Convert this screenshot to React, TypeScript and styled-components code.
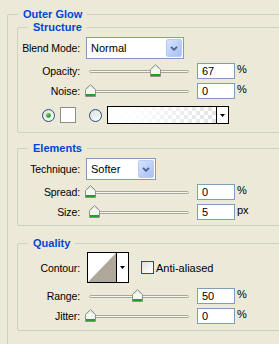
import React from "react";
import styled, { createGlobalStyle } from "styled-components";

const Global = createGlobalStyle`
  html, body { margin: 0; padding: 0; background: #ECE9D8; overflow: hidden; }
  body {
    font-family: "Liberation Sans", Arial, sans-serif;
    font-size: 10.5px;
    color: #000;
  }
`;

const Frame = styled.div`
  width: 100vw;
  height: 100vh;
  overflow: hidden;
`;

const Page = styled.div`
  padding: 8px 0 0 7px;
  width: 340px;
`;

const Group = styled.fieldset<{ $mt?: number }>`
  margin: ${(p) => p.$mt ?? 0}px 0 0 0;
  padding: 0;
  border: 1px solid #D0D0BF;
  border-radius: 2px;
  min-width: 0;
`;

const Outer = styled(Group)`
  height: 400px;
`;

const Title = styled.legend`
  margin-left: 10px;
  padding: 0 5px;
  font-weight: bold;
  font-size: 11px;
  line-height: 13px;
  color: #0046D5;
`;

const OuterBody = styled.div`
  padding: 0 0 0 9px;
`;

const Body = styled.div<{ $pt: number; $pb: number }>`
  display: flex;
  flex-direction: column;
  padding: ${(p) => p.$pt}px 0 ${(p) => p.$pb}px 0;
`;

const Row = styled.div<{ $mt?: number; $h: number; $pl?: number }>`
  display: flex;
  align-items: center;
  height: ${(p) => p.$h}px;
  margin-top: ${(p) => p.$mt ?? 0}px;
  padding-left: ${(p) => p.$pl ?? 0}px;
`;

const Label = styled.span`
  flex: none;
  width: 62px;
  margin-right: 6px;
  text-align: right;
  white-space: nowrap;
  letter-spacing: -0.1px;
`;

const Select = styled.div<{ $w: number }>`
  box-sizing: border-box;
  width: ${(p) => p.$w}px;
  height: 22px;
  border: 1px solid #7F9DB9;
  background: #fff;
  display: flex;
  align-items: center;
  padding: 1px;
`;

const SelectText = styled.span`
  flex: 1;
  padding-left: 3px;
  font-size: 11px;
`;

const ComboButton = styled.div`
  box-sizing: border-box;
  width: 16px;
  height: 100%;
  border: 1px solid #B9CBF3;
  border-radius: 2px;
  background: linear-gradient(135deg, #D8E4FD 0%, #B9CDF9 60%, #A9C0F5 100%);
  display: flex;
  align-items: center;
  justify-content: center;
`;

const SliderBox = styled.div`
  position: relative;
  flex: none;
  width: 111px;
  height: 16px;
  display: flex;
  align-items: center;
`;

const Track = styled.div`
  box-sizing: border-box;
  margin-left: 3px;
  width: 100px;
  height: 3px;
  border: 1px solid #A8A696;
  border-radius: 2px;
  background: #F7F6F1;
`;

const Thumb = styled.svg`
  position: absolute;
  top: 1px;
`;

const NumBox = styled.div`
  box-sizing: border-box;
  flex: none;
  width: 38px;
  height: 16px;
  border: 1px solid #7F9DB9;
  background: #fff;
  padding-left: 4px;
  line-height: 14px;
  font-size: 11px;
`;

const Unit = styled.span`
  align-self: flex-start;
  margin-left: 2px;
  line-height: 13px;
  font-size: 11px;
`;

const Swatch = styled.div`
  box-sizing: border-box;
  width: 16px;
  height: 16px;
  margin-left: 5px;
  border: 1px solid #8E8E86;
  background: #fff;
`;

const GradientBox = styled.div`
  box-sizing: border-box;
  margin-left: 5px;
  width: 122px;
  height: 18px;
  border: 1px solid #000;
  display: flex;
`;

const GradientFill = styled.div`
  flex: 1;
  background:
    linear-gradient(to right, #fff 0%, rgba(255, 255, 255, 0.9) 25%, rgba(255, 255, 255, 0) 100%),
    repeating-conic-gradient(#E2E2E2 0% 25%, #fff 0% 50%) 0 0 / 8px 8px;
`;

const DropPart = styled.div`
  width: 11px;
  border-left: 1px solid #000;
  background: #fff;
  display: flex;
  align-items: center;
  justify-content: center;
`;

const ContourBox = styled.div`
  box-sizing: border-box;
  margin-left: 1px;
  width: 42px;
  height: 31px;
  border: 1px solid #000;
  display: flex;
`;

const ContourPreview = styled.svg`
  display: block;
`;

const CheckLabel = styled.label`
  display: flex;
  align-items: center;
  margin-left: 12px;
  font-size: 11px;
`;

const CheckBox = styled.span`
  box-sizing: border-box;
  width: 13px;
  height: 13px;
  margin-right: 2px;
  border: 1px solid #1C5180;
  background: linear-gradient(135deg, #DCDCD7 0%, #F5F5F2 60%, #fff 100%);
`;

const Chevron = () => (
  <svg width="8" height="5" viewBox="0 0 8 5">
    <path d="M1 0.8 L4 3.8 L7 0.8" fill="none" stroke="#4D6185" strokeWidth="1.8" />
  </svg>
);

const DownTri = () => (
  <svg width="5" height="3" viewBox="0 0 5 3">
    <path d="M0 0 H5 L2.5 3 Z" fill="#000" />
  </svg>
);

const Radio = ({ checked, ml = 0 }: { checked?: boolean; ml?: number }) => (
  <svg width="13" height="13" viewBox="0 0 13 13" style={{ marginLeft: ml }}>
    <defs>
      <linearGradient id="rg" x1="0" y1="0" x2="1" y2="1">
        <stop offset="0" stopColor="#DCDCD6" />
        <stop offset="1" stopColor="#FFFFFF" />
      </linearGradient>
    </defs>
    <circle cx="6.5" cy="6.5" r="6" fill="url(#rg)" stroke="#1C5180" />
    {checked && <circle cx="6.5" cy="6.5" r="2.3" fill="#21A121" />}
    {checked && <circle cx="6" cy="6" r="0.9" fill="#7AD77A" />}
  </svg>
);

const Slider = ({ pct }: { pct: number }) => (
  <SliderBox>
    <Track />
    <Thumb
      width="11"
      height="13"
      viewBox="0 0 11 13"
      style={{ left: 4 + pct * 0.98 - 5.5 }}
    >
      <path d="M0.5 5.5 L5.5 0.5 L10.5 5.5 V12.5 H0.5 Z" fill="#F6F6F2" stroke="#8F9191" />
      <path d="M2 5.3 L5.5 1.8 L9 5.3" fill="none" stroke="#BFE3BF" />
      <rect x="1" y="10" width="9" height="2" fill="#21A121" />
    </Thumb>
  </SliderBox>
);

const SliderRow = ({
  label,
  pct,
  value,
  unit = "%",
  mt,
}: {
  label: string;
  pct: number;
  value: string;
  unit?: string;
  mt: number;
}) => (
  <Row $h={16} $mt={mt}>
    <Label>{label}</Label>
    <Slider pct={pct} />
    <NumBox>{value}</NumBox>
    <Unit>{unit}</Unit>
  </Row>
);

export default function App() {
  return (
    <>
      <Global />
      <Frame>
        <Page>
          <Outer>
            <Title>Outer Glow</Title>
            <OuterBody>
              <Group>
                <Title>Structure</Title>
                <Body $pt={3} $pb={8}>
                  <Row $h={22}>
                    <Label>Blend Mode:</Label>
                    <Select $w={98}>
                      <SelectText>Normal</SelectText>
                      <ComboButton>
                        <Chevron />
                      </ComboButton>
                    </Select>
                  </Row>
                  <SliderRow label="Opacity:" pct={67} value="67" mt={4} />
                  <SliderRow label="Noise:" pct={0} value="0" mt={4} />
                  <Row $h={18} $mt={7} $pl={24}>
                    <Radio checked />
                    <Swatch />
                    <Radio ml={13} />
                    <GradientBox>
                      <GradientFill />
                      <DropPart>
                        <DownTri />
                      </DropPart>
                    </GradientBox>
                  </Row>
                </Body>
              </Group>

              <Group $mt={9}>
                <Title>Elements</Title>
                <Body $pt={3} $pb={5}>
                  <Row $h={22}>
                    <Label>Technique:</Label>
                    <Select $w={70}>
                      <SelectText>Softer</SelectText>
                      <ComboButton>
                        <Chevron />
                      </ComboButton>
                    </Select>
                  </Row>
                  <SliderRow label="Spread:" pct={0} value="0" mt={4} />
                  <SliderRow label="Size:" pct={5} value="5" unit="px" mt={4} />
                </Body>
              </Group>

              <Group $mt={11}>
                <Title>Quality</Title>
                <Body $pt={2} $pb={6}>
                  <Row $h={31}>
                    <Label>Contour:</Label>
                    <ContourBox>
                      <ContourPreview width="28" height="29" viewBox="0 0 28 29">
                        <rect width="28" height="29" fill="#fff" />
                        <path d="M0 29 L28 0 V29 Z" fill="#ADA899" />
                      </ContourPreview>
                      <DropPart>
                        <DownTri />
                      </DropPart>
                    </ContourBox>
                    <CheckLabel>
                      <CheckBox />
                      Anti-aliased
                    </CheckLabel>
                  </Row>
                  <SliderRow label="Range:" pct={48} value="50" mt={5} />
                  <SliderRow label="Jitter:" pct={0} value="0" mt={4} />
                </Body>
              </Group>
            </OuterBody>
          </Outer>
        </Page>
      </Frame>
    </>
  );
}
